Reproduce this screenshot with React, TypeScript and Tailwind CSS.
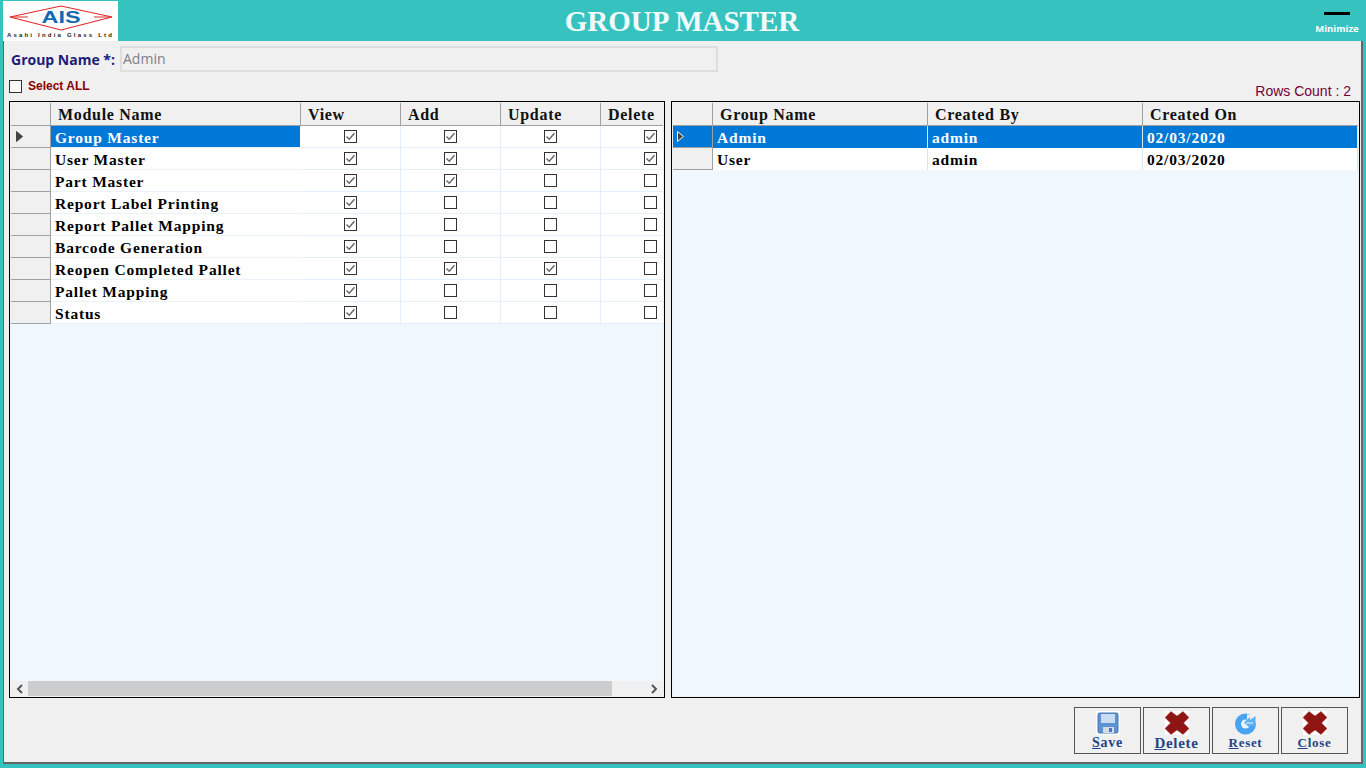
import React from "react";

const serif = "font-['Liberation_Serif',serif] tracking-[0.7px]";
const cellSerif = "font-['Liberation_Serif',serif] tracking-[0.8px]";

function Check({ on }: { on: boolean }) {
  return (
    <svg width="13" height="13" viewBox="0 0 13 13" className="block">
      <rect x="0.5" y="0.5" width="12" height="12" fill="#fff" stroke="#333" />
      {on && <path d="M2.5 6.5 L5.2 9.2 L10.5 3.2" fill="none" stroke="#666" strokeWidth="1.4" />}
    </svg>
  );
}

const modules: [string, boolean, boolean, boolean, boolean][] = [
  ["Group Master", true, true, true, true],
  ["User Master", true, true, true, true],
  ["Part Master", true, true, false, false],
  ["Report Label Printing", true, false, false, false],
  ["Report Pallet Mapping", true, false, false, false],
  ["Barcode Generation", true, false, false, false],
  ["Reopen Completed Pallet", true, true, true, false],
  ["Pallet Mapping", true, false, false, false],
  ["Status", true, false, false, false],
];

function HeadCell({ w, children }: { w: string; children?: React.ReactNode }) {
  return (
    <div className={`${w} h-full shrink-0 border-r border-[#a0a0a0] pl-[7px] text-[16px] leading-[23px] font-bold text-[#111] whitespace-nowrap ${serif}`}>
      {children}
    </div>
  );
}

function Arrow({ hollow }: { hollow?: boolean }) {
  return (
    <svg width="9" height="13" viewBox="0 0 9 13" className="block">
      <path d="M1.5 1.5 L7.5 6.5 L1.5 11.5 Z" fill="#444" stroke={hollow ? "#fff" : "#444"} strokeWidth="1" />
    </svg>
  );
}

function FloppyIcon() {
  return (
    <svg width="24" height="24" viewBox="0 0 24 24" className="block bg-white">
      <rect x="2" y="2" width="20" height="20" rx="1.5" fill="#5d92d6" stroke="#4a78b5" />
      <rect x="5" y="3" width="14" height="9" fill="#c9dcf2" />
      <rect x="7" y="16" width="11" height="6" fill="#d4dbe4" />
      <rect x="13" y="17" width="3" height="4" fill="#4a78b5" />
    </svg>
  );
}

function CrossIcon() {
  return (
    <svg width="24" height="24" viewBox="0 0 24 24" className="block bg-white">
      <path d="M6 0.5 L12 5 L18 0.5 L24 6.5 L18.5 12 L24 17.5 L18 23.5 L12 19 L6 23.5 L0 17.5 L5.5 12 L0 6.5 Z" fill="#8f1414" stroke="#a83232" strokeWidth="0.5" />
    </svg>
  );
}

function ResetIcon() {
  return (
    <svg width="24" height="24" viewBox="0 0 24 24" className="block">
      <circle cx="11.5" cy="13" r="10.5" fill="#4aa3ee" />
      <circle cx="11.5" cy="13" r="4.5" fill="#e6f3fd" />
      <path d="M13 3.5 H22 V12 H13 Z" fill="#f0f0f0" />
      <path d="M10 11.5 L16 6 V9 L21.5 5 V15 H16 V17 Z" fill="#5bb0f2" />
      <path d="M12 11.5 H19 V12.5 H12 Z" fill="#e6f3fd" />
    </svg>
  );
}

function ActionButton({ icon, first, rest, size }: { icon: React.ReactNode; first: string; rest: string; size: string }) {
  return (
    <button className="w-[67px] h-[47px] border border-[#555] bg-[#f0f0f0] flex flex-col items-center pt-[3px]">
      {icon}
      <span className={`${size} leading-[14px] mt-[1px] font-bold text-[#1f4587] ${serif}`}>
        <span className="underline">{first}</span>
        {rest}
      </span>
    </button>
  );
}

export default function App() {
  return (
    <div className="w-[1366px] h-[768px] overflow-hidden bg-[#36c3c0] flex flex-col font-['Open_Sans',sans-serif]">
      {/* Title bar */}
      <header className="h-[41px] shrink-0 flex items-stretch">
        <div className="w-[115px] h-[40px] ml-[3px] mt-[1px] bg-white flex flex-col items-center overflow-hidden shrink-0">
          <svg width="115" height="31" viewBox="0 0 115 31" className="block shrink-0">
            <path d="M7 16 L58 5 L109 16 L58 29 Z" fill="#fff" stroke="#e02a2a" strokeWidth="1.2" />
            <path d="M7 16 L25 16 M91 16 L109 16" stroke="#e02a2a" strokeWidth="1" />
            <text x="58" y="22" textAnchor="middle" fontSize="17" fontWeight="700" fill="#1268b3" textLength="39" lengthAdjust="spacingAndGlyphs" fontFamily="Liberation Sans, sans-serif">AIS</text>
          </svg>
          <div className="text-[6px] leading-[7px] font-bold text-[#222] tracking-[2.2px] whitespace-nowrap font-['Liberation_Sans',sans-serif]">Asahi India Glass Ltd</div>
        </div>
        <h1 className="flex-1 text-center text-[29px] leading-[42px] font-bold text-[#f2fbfb] pr-[66px] font-['Liberation_Serif',serif]">GROUP MASTER</h1>
        <div className="w-[50px] mr-[4px] shrink-0 flex flex-col items-center pt-[12px]">
          <div className="w-[26px] h-[3px] bg-black" />
          <div className="text-[9.5px] leading-[12px] mt-[8px] font-bold text-white whitespace-nowrap">Minimize</div>
        </div>
      </header>

      {/* Body */}
      <main className="h-[723px] mx-[3px] w-[1360px] bg-[#f0f0f0] border-l border-r-2 border-b-2 border-[#666] pl-[5px] pr-[1px] flex flex-col shrink-0">
        <div className="h-[36px] flex items-center shrink-0">
          <label className="ml-[2px] w-[108px] text-[14px] font-bold text-[#1c1c78] whitespace-nowrap">Group Name *:</label>
          <div className="w-[598px] h-[26px] ml-[1px] bg-[#f0f0f0] border-2 border-[#dedede] text-[14px] leading-[22px] pl-[1px] text-[#7a8288]">Admin</div>
        </div>
        <div className="h-[24px] flex items-start justify-between shrink-0">
          <div className="flex items-center mt-[3px]">
            <div className="w-[13px] h-[13px] border border-[#333] bg-[#f8f8f8]" />
            <span className="ml-[6px] text-[12px] leading-[13px] font-semibold text-[#8b0000] font-['Liberation_Sans',sans-serif]">Select ALL</span>
          </div>
          <div className="text-[14px] leading-[16px] text-[#72003a] mt-[6px] mr-[9px] font-['Liberation_Sans',sans-serif]">Rows Count : 2</div>
        </div>

        <div className="flex gap-[6px] h-[597px] shrink-0">
          {/* Left grid */}
          <section className="w-[656px] h-full border border-black p-[1px] bg-[#f0f0f0] shrink-0">
            <div className="h-full bg-[#eff7ff] flex flex-col overflow-hidden">
              <div className="h-[22px] flex bg-[#f0f0f0] border-b border-[#a0a0a0] shrink-0 box-content w-[700px]">
                <HeadCell w="w-[40px]" />
                <HeadCell w="w-[250px]">Module Name</HeadCell>
                <HeadCell w="w-[100px]">View</HeadCell>
                <HeadCell w="w-[100px]">Add</HeadCell>
                <HeadCell w="w-[100px]">Update</HeadCell>
                <div className={`flex-1 pl-[7px] text-[16px] leading-[23px] font-bold text-[#111] ${serif}`}>Delete</div>
              </div>
              <div className="flex-1 min-h-0 w-[700px]">
                {modules.map((m, i) => (
                  <div key={m[0]} className="h-[22px] flex">
                    <div className="w-[40px] shrink-0 bg-[#f0f0f0] border-r border-b border-[#a0a0a0] flex items-center pl-[4px]">
                      {i === 0 && <Arrow />}
                    </div>
                    <div className={`w-[249px] shrink-0 pl-[4px] text-[15.5px] leading-[23px] font-bold whitespace-nowrap border-b border-[#eaf3fb] ${cellSerif} ${i === 0 ? "bg-[#0078d7] text-white" : "bg-white text-black"}`}>
                      {m[0]}
                    </div>
                    <div className="w-[1px] shrink-0 bg-white" />
                    {[m[1], m[2], m[3], m[4]].map((c, j) => (
                      <div key={j} className="w-[100px] shrink-0 bg-white border-r border-b border-[#e3effa] flex items-center justify-center">
                        <Check on={c} />
                      </div>
                    ))}
                  </div>
                ))}
              </div>
              <div className="h-[15px] bg-[#f0f0f0] flex items-stretch shrink-0">
                <div className="w-[17px] flex items-center justify-center">
                  <svg width="8" height="10" viewBox="0 0 8 10"><path d="M6 1 L2 5 L6 9" fill="none" stroke="#555" strokeWidth="2" /></svg>
                </div>
                <div className="w-[584px] bg-[#cdcdcd]" />
                <div className="flex-1 flex items-center justify-end pr-[5px]">
                  <svg width="8" height="10" viewBox="0 0 8 10"><path d="M2 1 L6 5 L2 9" fill="none" stroke="#555" strokeWidth="2" /></svg>
                </div>
              </div>
            </div>
          </section>

          {/* Right grid */}
          <section className="w-[689px] h-full border border-black p-[1px] bg-[#f0f0f0] shrink-0">
            <div className="h-full bg-[#eff7ff] flex flex-col overflow-hidden">
              <div className="h-[22px] flex bg-[#f0f0f0] border-b border-[#a0a0a0] shrink-0 box-content">
                <HeadCell w="w-[40px]" />
                <HeadCell w="w-[215px]">Group Name</HeadCell>
                <HeadCell w="w-[215px]">Created By</HeadCell>
                <div className={`flex-1 pl-[7px] text-[16px] leading-[23px] font-bold text-[#111] ${serif}`}>Created On</div>
              </div>
              {[
                ["Admin", "admin", "02/03/2020"],
                ["User", "admin", "02/03/2020"],
              ].map((r, i) => (
                <div key={r[0]} className="h-[22px] flex shrink-0">
                  <div className={`w-[40px] shrink-0 border-r border-b border-[#a0a0a0] flex items-center ${i === 0 ? "bg-[#0078d7] pl-[3px]" : "bg-[#f0f0f0]"}`}>
                    {i === 0 && <Arrow hollow />}
                  </div>
                  {r.map((t, j) => (
                    <div key={j} className={`${j === 2 ? "flex-1" : "w-[215px] shrink-0"} pl-[4px] text-[15.5px] leading-[23px] font-bold border-r border-[#d8e6f2] ${cellSerif} ${i === 0 ? "bg-[#0078d7] text-white" : "bg-white text-black"}`}>
                      {t}
                    </div>
                  ))}
                </div>
              ))}
            </div>
          </section>
        </div>

        <footer className="flex-1 flex items-start justify-end gap-[2px] pt-[9px] pr-[12px]">
          <ActionButton size="text-[14px]" icon={<FloppyIcon />} first="S" rest="ave" />
          <ActionButton size="text-[15px]" icon={<CrossIcon />} first="D" rest="elete" />
          <ActionButton size="text-[13px]" icon={<ResetIcon />} first="R" rest="eset" />
          <ActionButton size="text-[13px]" icon={<CrossIcon />} first="C" rest="lose" />
        </footer>
      </main>
    </div>
  );
}
